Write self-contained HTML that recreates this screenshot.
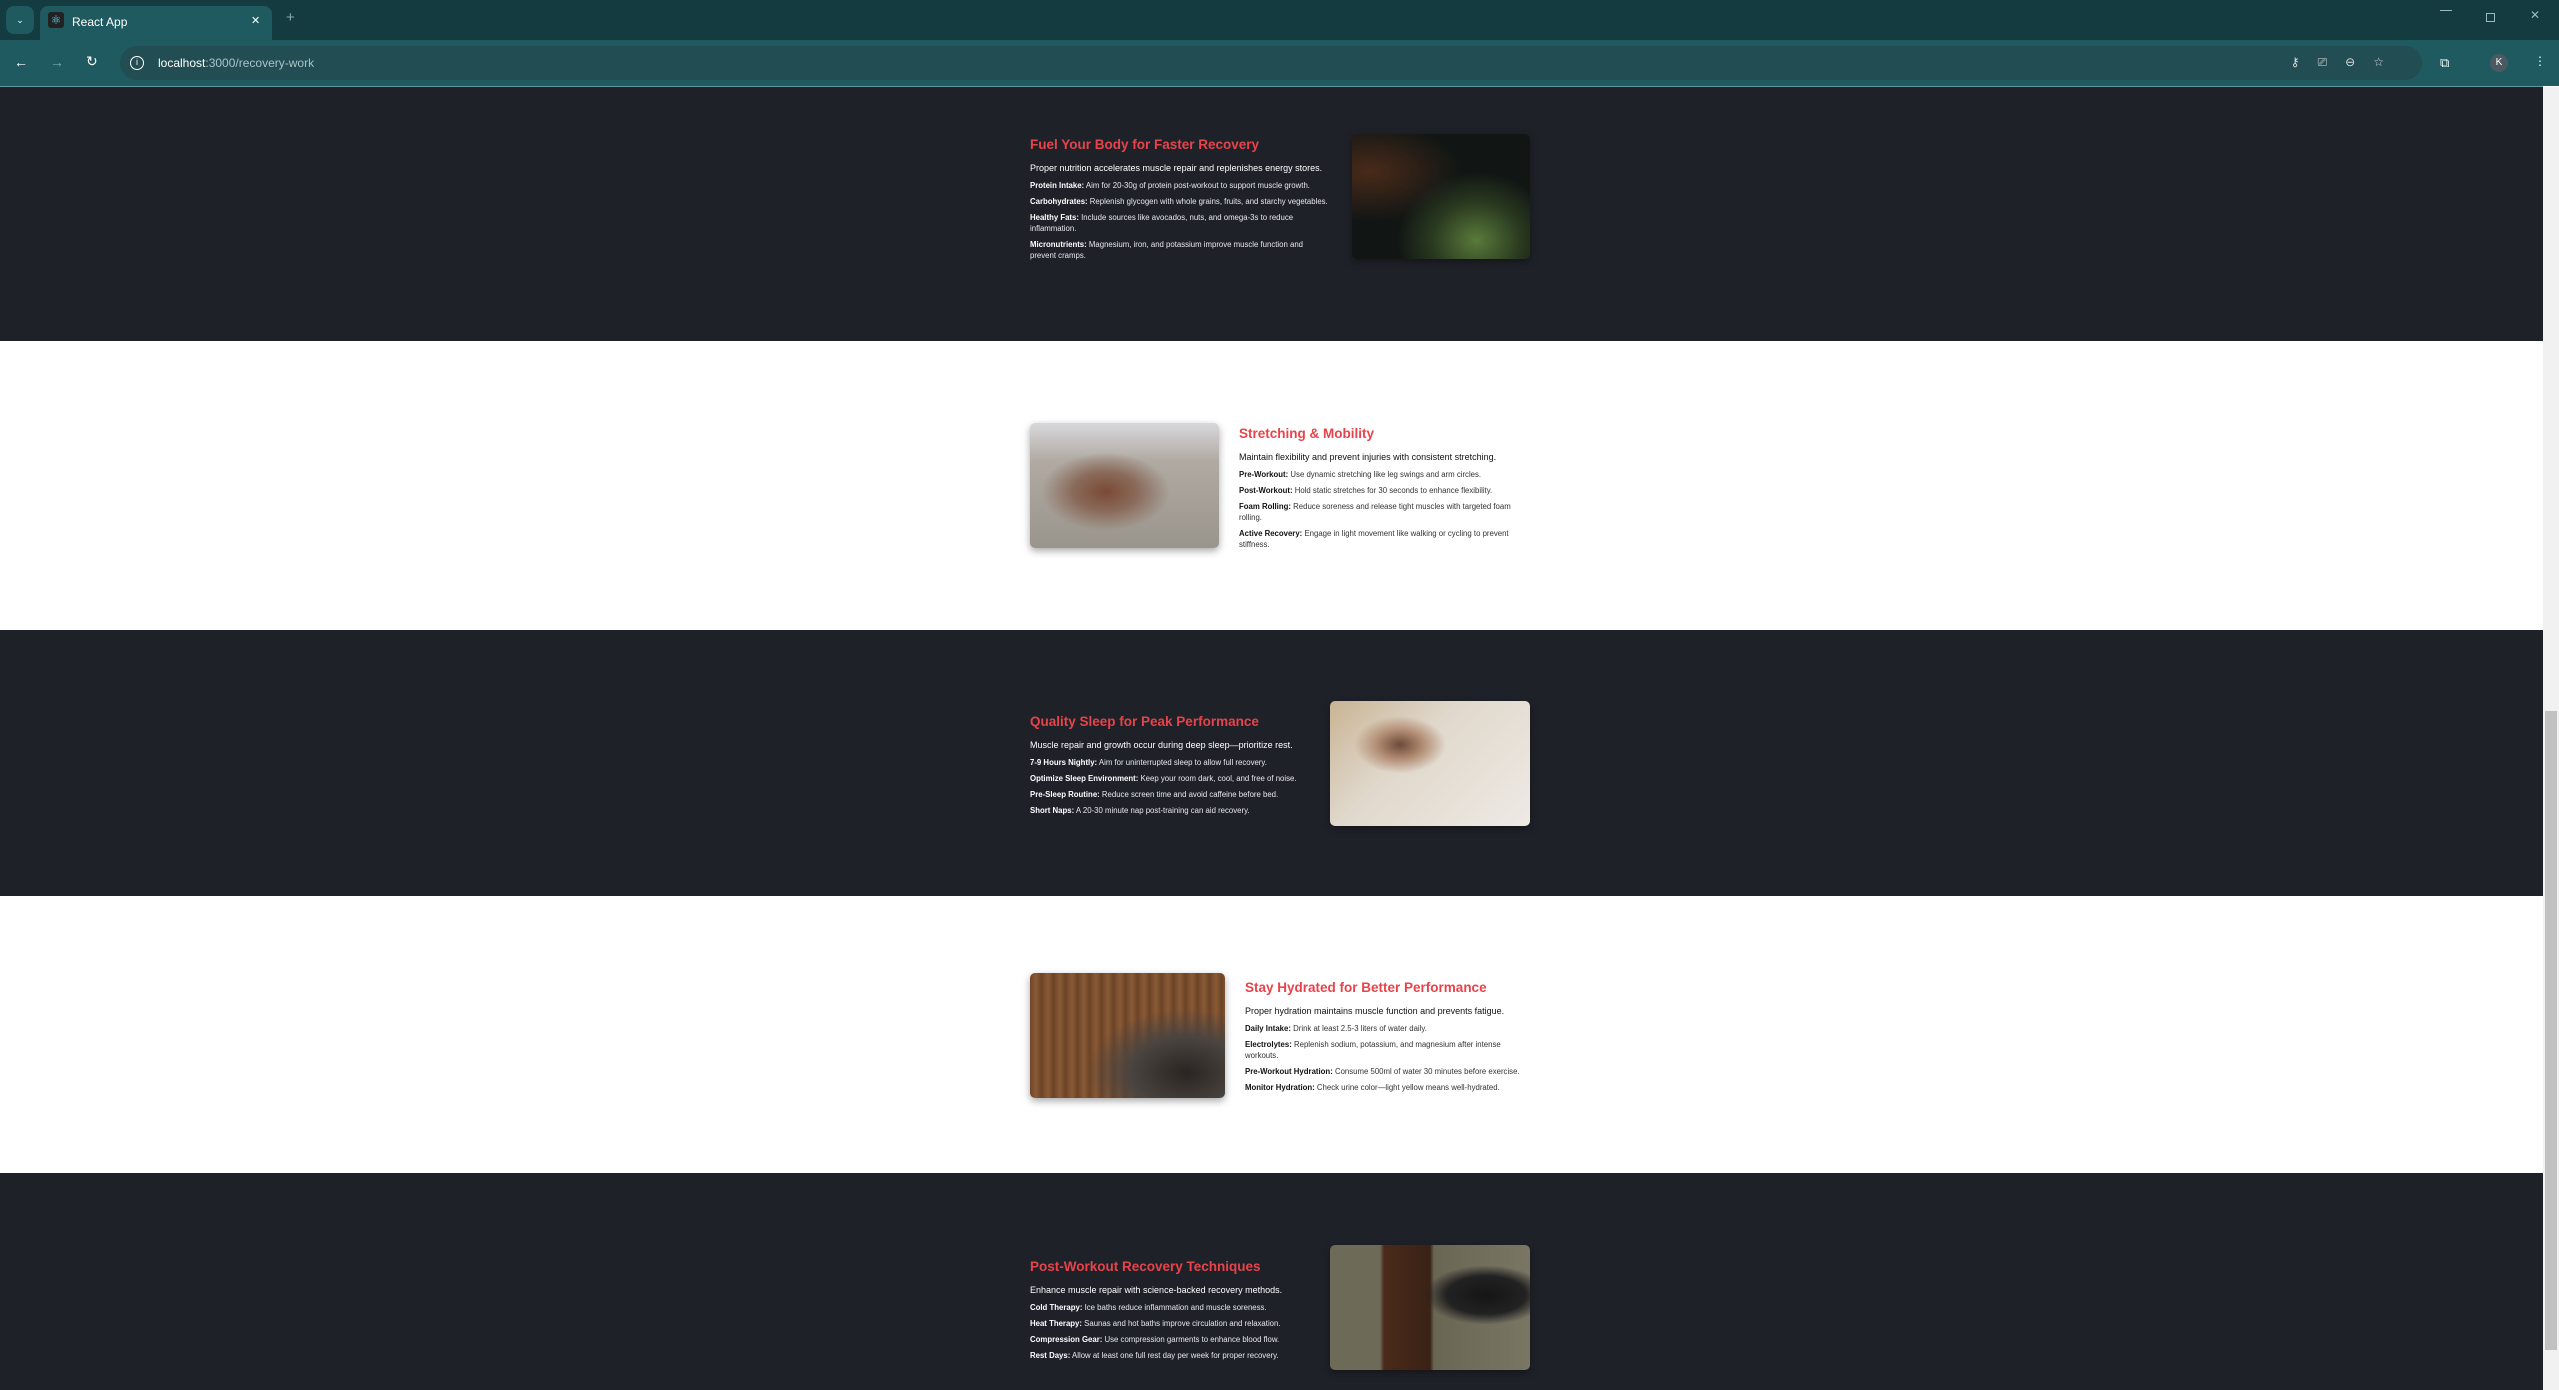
<!DOCTYPE html>
<html><head><meta charset="utf-8"><style>
*{margin:0;padding:0;box-sizing:border-box}
body{width:2559px;height:1390px;overflow:hidden;font-family:"Liberation Sans",sans-serif;background:#fff;position:relative}
.tabs{position:absolute;left:0;top:0;width:2559px;height:40px;background:#133b40}
.tb{position:absolute;left:0;top:40px;width:2559px;height:46px;background:#1e5a60}
.line{position:absolute;left:0;top:86px;width:2543px;height:1px;background:#5e9a9c}
.tab{position:absolute;left:40px;top:6px;width:232px;height:34px;background:#1e5a60;border-radius:8px 8px 0 0;color:#fff;font-size:12px}
.omni{position:absolute;left:120px;top:46px;width:2302px;height:34px;background:#224d52;border-radius:17px}
.sec{position:absolute;left:0;width:2543px}
.dark{background:#1f2129;color:#fff}
.white{background:#fff;color:#111}
.blk{position:absolute}
h2{font-size:13.5px;color:#e8434a;font-weight:bold;line-height:16px;margin-bottom:9px;white-space:nowrap}
.p{font-size:9px;line-height:12px;margin-bottom:6px;white-space:nowrap}
.li{font-size:7.8px;line-height:11px;margin-bottom:5px}
.white .li{color:#333}.white .li b{color:#111}
.dark .li{color:#e8e8ee}.dark .li b{color:#fff}
.img{position:absolute;border-radius:5px;box-shadow:0 3px 8px rgba(0,0,0,.35);overflow:hidden}
</style></head><body>
<div class="tabs"></div>
<div style="position:absolute;left:6px;top:6px;width:28px;height:28px;border-radius:8px;background:#1e5a60;color:#fff;font-size:9px;text-align:center;line-height:28px">&#8964;</div>
<div class="tab"><div style="position:absolute;left:8px;top:6px;width:16px;height:16px;background:#222;border-radius:3px;color:#61dafb;font-size:12px;line-height:16px;text-align:center">⚛</div><span style="position:absolute;left:32px;top:9px">React App</span><span style="position:absolute;left:211px;top:8px;font-size:11px">✕</span></div>
<div style="position:absolute;left:286px;top:9px;color:#8aa;font-size:15px">+</div>
<div style="position:absolute;left:2440px;top:10px;width:12px;height:1px;background:#9bb"></div>
<div style="position:absolute;left:2486px;top:13px;width:9px;height:9px;border:1px solid #9bb"></div>
<div style="position:absolute;left:2530px;top:8px;color:#9bb;font-size:12px">✕</div>
<div class="tb"></div><div class="line"></div>
<div style="position:absolute;left:14px;top:54px;color:#fff;font-size:14px">←</div>
<div style="position:absolute;left:50px;top:54px;color:#7aa;font-size:14px">→</div>
<div style="position:absolute;left:86px;top:53px;color:#fff;font-size:14px">↻</div>
<div class="omni"><div style="position:absolute;left:10px;top:10px;width:14px;height:14px;border-radius:50%;border:1.5px solid #fff;color:#fff;font-size:9px;text-align:center;line-height:11px">i</div><span style="position:absolute;left:38px;top:10px;font-size:12px;color:#fff">localhost<span style="color:#a9c4c6">:3000/recovery-work</span></span>
<span style="position:absolute;right:20px;top:9px;color:#ddd;font-size:12px;letter-spacing:18px">⚷⎚⊖☆</span></div>
<div style="position:absolute;left:2440px;top:55px;color:#fff;font-size:13px">⧉</div>
<div style="position:absolute;left:2490px;top:54px;width:18px;height:18px;border-radius:50%;background:#4a5a60;color:#fff;font-size:10px;text-align:center;line-height:18px">K</div>
<div style="position:absolute;left:2534px;top:54px;color:#fff;font-size:12px">⋮</div>

<div class="sec dark" style="top:87px;height:254px"></div>
<div class="sec white" style="top:341px;height:289px"></div>
<div class="sec dark" style="top:630px;height:266px"></div>
<div class="sec white" style="top:896px;height:277px"></div>
<div class="sec dark" style="top:1173px;height:217px"></div>
<div style="position:absolute;left:2543px;top:87px;width:16px;height:1303px;background:#f1f1f1"></div>
<div style="position:absolute;left:2545px;top:711px;width:12px;height:639px;background:#c1c1c1"></div>

<div class="blk dark" style="left:1030px;top:137px;width:300px;background:none">
<h2>Fuel Your Body for Faster Recovery</h2>
<div class="p">Proper nutrition accelerates muscle repair and replenishes energy stores.</div>
<div class="li"><b>Protein Intake:</b> Aim for 20-30g of protein post-workout to support muscle growth.</div>
<div class="li"><b>Carbohydrates:</b> Replenish glycogen with whole grains, fruits, and starchy vegetables.</div>
<div class="li"><b>Healthy Fats:</b> Include sources like avocados, nuts, and omega-3s to reduce inflammation.</div>
<div class="li"><b>Micronutrients:</b> Magnesium, iron, and potassium improve muscle function and prevent cramps.</div>
</div>
<div class="img" style="left:1352px;top:134px;width:178px;height:125px;background:radial-gradient(ellipse at 70% 85%,#5a7a3a 0,#2a3a20 25%,transparent 45%),radial-gradient(ellipse at 10% 30%,#4a2a1a,transparent 40%),#111614"></div>

<div class="blk white" style="left:1239px;top:426px;width:278px;background:none">
<h2>Stretching &amp; Mobility</h2>
<div class="p">Maintain flexibility and prevent injuries with consistent stretching.</div>
<div class="li"><b>Pre-Workout:</b> Use dynamic stretching like leg swings and arm circles.</div>
<div class="li"><b>Post-Workout:</b> Hold static stretches for 30 seconds to enhance flexibility.</div>
<div class="li"><b>Foam Rolling:</b> Reduce soreness and release tight muscles with targeted foam rolling.</div>
<div class="li"><b>Active Recovery:</b> Engage in light movement like walking or cycling to prevent stiffness.</div>
</div>
<div class="img" style="left:1030px;top:423px;width:189px;height:125px;background:radial-gradient(ellipse at 40% 55%,#7a4a35 0,#8a6a5a 20%,transparent 40%),linear-gradient(180deg,#d8d8dc 0,#b0aaa2 30%,#9a958c 100%)"></div>

<div class="blk dark" style="left:1030px;top:714px;width:300px;background:none">
<h2>Quality Sleep for Peak Performance</h2>
<div class="p">Muscle repair and growth occur during deep sleep—prioritize rest.</div>
<div class="li"><b>7-9 Hours Nightly:</b> Aim for uninterrupted sleep to allow full recovery.</div>
<div class="li"><b>Optimize Sleep Environment:</b> Keep your room dark, cool, and free of noise.</div>
<div class="li"><b>Pre-Sleep Routine:</b> Reduce screen time and avoid caffeine before bed.</div>
<div class="li"><b>Short Naps:</b> A 20-30 minute nap post-training can aid recovery.</div>
</div>
<div class="img" style="left:1330px;top:701px;width:200px;height:125px;background:radial-gradient(ellipse at 35% 35%,#6a4a3a 0,#b08a70 12%,transparent 25%),linear-gradient(135deg,#c9b494 0,#e0d8cc 40%,#eeeae4 100%)"></div>

<div class="blk white" style="left:1245px;top:980px;width:285px;background:none">
<h2>Stay Hydrated for Better Performance</h2>
<div class="p">Proper hydration maintains muscle function and prevents fatigue.</div>
<div class="li"><b>Daily Intake:</b> Drink at least 2.5-3 liters of water daily.</div>
<div class="li"><b>Electrolytes:</b> Replenish sodium, potassium, and magnesium after intense workouts.</div>
<div class="li"><b>Pre-Workout Hydration:</b> Consume 500ml of water 30 minutes before exercise.</div>
<div class="li"><b>Monitor Hydration:</b> Check urine color—light yellow means well-hydrated.</div>
</div>
<div class="img" style="left:1030px;top:973px;width:195px;height:125px;background:radial-gradient(ellipse at 80% 80%,#2a2522 0,#4a4440 25%,transparent 45%),repeating-linear-gradient(90deg,#6e4628 0,#8a5a36 6px,#6a4226 12px)"></div>

<div class="blk dark" style="left:1030px;top:1259px;width:300px;background:none">
<h2>Post-Workout Recovery Techniques</h2>
<div class="p">Enhance muscle repair with science-backed recovery methods.</div>
<div class="li"><b>Cold Therapy:</b> Ice baths reduce inflammation and muscle soreness.</div>
<div class="li"><b>Heat Therapy:</b> Saunas and hot baths improve circulation and relaxation.</div>
<div class="li"><b>Compression Gear:</b> Use compression garments to enhance blood flow.</div>
<div class="li"><b>Rest Days:</b> Allow at least one full rest day per week for proper recovery.</div>
</div>
<div class="img" style="left:1330px;top:1245px;width:200px;height:125px;background:radial-gradient(ellipse at 78% 40%,#151515 0,#222 18%,transparent 28%),linear-gradient(90deg,#6e6a58 0,#6e6a58 25%,#4a2a1a 27%,#3a2216 50%,#6a6654 52%,#7a7664 100%)"></div>
</body></html>
